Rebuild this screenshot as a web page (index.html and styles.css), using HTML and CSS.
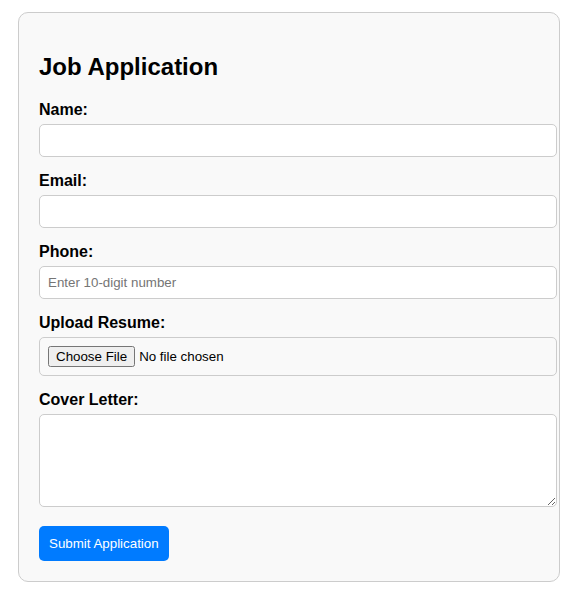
FILE: index.html
```html
<!DOCTYPE html>
<html lang="en">
<head>
<meta charset="utf-8">
<title>Job Application</title>
<link rel="stylesheet" href="styles.css">
</head>
<body>
<div class="container">
  <h2 class="title">Job Application</h2>
  <form class="form">
    <label class="label" for="name">Name:</label>
    <input class="field" type="text" id="name">
    <label class="label" for="email">Email:</label>
    <input class="field" type="email" id="email">
    <label class="label" for="phone">Phone:</label>
    <input class="field" type="tel" id="phone" placeholder="Enter 10-digit number">
    <label class="label" for="resume">Upload Resume:</label>
    <input class="field file" type="file" id="resume">
    <label class="label" for="cover">Cover Letter:</label>
    <textarea class="field area" id="cover"></textarea>
    <button class="submit" type="submit">Submit Application</button>
  </form>
</div>
</body>
</html>
```
FILE: styles.css
```css
body {
  margin: 0;
  font-family: "Liberation Sans", Arial, sans-serif;
}
.container {
  width: 500px;
  margin: 12px 0 0 18px;
  padding: 20px;
  background: #f9f9f9;
  border: 1px solid #ccc;
  border-radius: 10px;
}
.title {
  font-size: 24px;
  margin: 20px 0;
  line-height: 28px;
}
.form {
  display: block;
}
.label {
  display: block;
  font-weight: bold;
  font-size: 16px;
  line-height: 18px;
  margin-bottom: 5px;
}
.field {
  display: block;
  width: 100%;
  margin: 0 0 15px 0;
  padding: 8px;
  border: 1px solid #ccc;
  border-radius: 5px;
  font-family: "Liberation Sans", Arial, sans-serif;
  font-size: 13.333px;
  line-height: 15px;
  height: 15px;
  box-sizing: content-box;
}
.field::placeholder {
  color: #757575;
}
.file {
  height: 21px;
  line-height: 21px;
  background: transparent;
}
.area {
  height: 75px;
  margin-bottom: 19px;
  resize: vertical;
}
.submit {
  display: block;
  padding: 10px;
  border: none;
  border-radius: 5px;
  background: #007bff;
  color: #fff;
  font-family: "Liberation Sans", Arial, sans-serif;
  font-size: 13.333px;
  line-height: 15px;
  cursor: pointer;
}
```
